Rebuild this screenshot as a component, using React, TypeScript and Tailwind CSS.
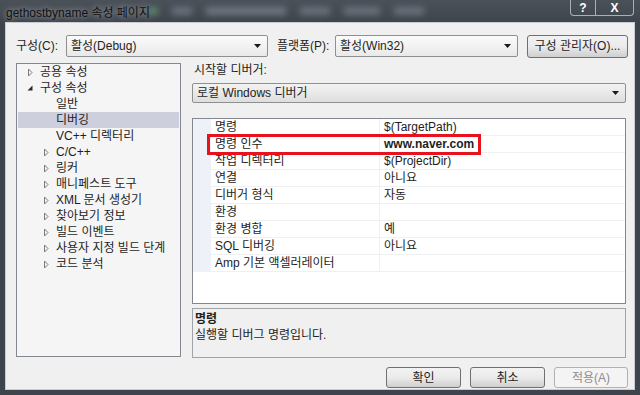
import React from "react";

const treeItems: { label: string; level: number; arrow?: "open" | "closed"; selected?: boolean }[] = [
  { label: "공용 속성", level: 0, arrow: "closed" },
  { label: "구성 속성", level: 0, arrow: "open" },
  { label: "일반", level: 1 },
  { label: "디버깅", level: 1, selected: true },
  { label: "VC++ 디렉터리", level: 1 },
  { label: "C/C++", level: 1, arrow: "closed" },
  { label: "링커", level: 1, arrow: "closed" },
  { label: "매니페스트 도구", level: 1, arrow: "closed" },
  { label: "XML 문서 생성기", level: 1, arrow: "closed" },
  { label: "찾아보기 정보", level: 1, arrow: "closed" },
  { label: "빌드 이벤트", level: 1, arrow: "closed" },
  { label: "사용자 지정 빌드 단계", level: 1, arrow: "closed" },
  { label: "코드 분석", level: 1, arrow: "closed" },
];

const props: [string, string, boolean?][] = [
  ["명령", "$(TargetPath)"],
  ["명령 인수", "www.naver.com", true],
  ["작업 디렉터리", "$(ProjectDir)"],
  ["연결", "아니요"],
  ["디버거 형식", "자동"],
  ["환경", ""],
  ["환경 병합", "예"],
  ["SQL 디버깅", "아니요"],
  ["Amp 기본 액셀러레이터", ""],
];

const DownArrow = () => (
  <svg width="7" height="4" viewBox="0 0 7 4">
    <path d="M0 0 H7 L3.5 4 Z" fill="#1a1a1a" />
  </svg>
);

const Combo = ({ text, w }: { text: string; w: string }) => (
  <div className={`${w} h-[22px] flex items-center justify-between pl-[4px] pr-[6px] rounded-[2px] border border-[#8e8f8f] bg-gradient-to-b from-[#fbfbfb] to-[#e9e9e9]`}>
    <span>{text}</span>
    <DownArrow />
  </div>
);

const Btn = ({ text, w, disabled }: { text: string; w: string; disabled?: boolean }) => (
  <div
    className={`${w} flex items-center justify-center rounded-[3px] border ${
      disabled
        ? "border-[#adb2b5] bg-[#f4f4f4] text-[#8d8d8d]"
        : "border-[#707070] bg-gradient-to-b from-[#f2f2f2] via-[#ebebeb] to-[#cfcfcf]"
    }`}
  >
    {text}
  </div>
);

const Arrow = ({ kind }: { kind: "open" | "closed" }) =>
  kind === "closed" ? (
    <svg width="6" height="9" viewBox="0 0 6 9">
      <path d="M1.5 1 L5 4.5 L1.5 8 Z" fill="none" stroke="#7a7a7a" />
    </svg>
  ) : (
    <svg width="6" height="6" viewBox="0 0 6 6">
      <path d="M5.5 0.5 L5.5 5.5 L0.5 5.5 Z" fill="#2a2a2a" />
    </svg>
  );

export default function App() {
  return (
    <div className="w-[640px] h-[395px] overflow-hidden flex flex-col bg-[#3e444c] font-['Liberation_Sans','Noto_Sans_CJK_KR',sans-serif] text-[12px] text-[#1e1e1e]">
      {/* title bar */}
      <div className="relative h-[22px] flex justify-between bg-gradient-to-b from-[#4b5159] to-[#3f454d]">
        <div className="absolute left-[150px] top-[2px] w-[290px] h-[18px] flex items-center gap-[14px] blur-[3px] opacity-60">
          <span className="w-[8px] h-[8px] rounded-full bg-[#6fc27a]" />
          <span className="w-[20px] h-[8px] bg-[#7f8a96]" />
          <span className="w-[80px] h-[8px] bg-[#8792a0]" />
          <span className="w-[30px] h-[8px] bg-[#7f8a96]" />
          <span className="w-[36px] h-[8px] bg-[#7f8a96]" />
          <span className="w-[30px] h-[8px] bg-[#7f8a96]" />
        </div>
        <div className="relative pl-[6px] pt-[4px] text-[#111] [text-shadow:0_0_6px_rgba(255,255,255,0.7)]">
          gethostbyname 속성 페이지
        </div>
        <div className="relative flex mr-[6px] h-[16px] border border-t-0 border-[#aab0b8] rounded-b-[4px] text-white font-bold text-[12px]">
          <div className="w-[25px] flex items-center justify-center border-r border-[#aab0b8]">?</div>
          <div className="w-[37px] flex items-center justify-center">X</div>
        </div>
      </div>

      {/* client */}
      <div className="flex-1 mx-[5px] mb-[5px] bg-[#f0f0f0] border border-[#c9cdd2] flex flex-col pl-[10px] pr-[6px] pt-[12px]">
        <div className="h-[22px] flex items-center">
          <span className="w-[50px]">구성(C):</span>
          <Combo text="활성(Debug)" w="w-[202px]" />
          <span className="w-[58px] ml-[9px]">플랫폼(P):</span>
          <Combo text="활성(Win32)" w="w-[183px]" />
          <div className="ml-[9px] h-[23px] flex">
            <Btn text="구성 관리자(O)..." w="w-[101px]" />
          </div>
        </div>

        <div className="mt-[6px] flex">
          {/* tree */}
          <div className="w-[165px] h-[294px] border border-[#828790] bg-[#f5f5f5] px-[1px]">
            {treeItems.map((it) => (
              <div
                key={it.label}
                className={`h-[16px] flex items-center ${it.selected ? "bg-[#cdd0dc]" : ""} ${it.level === 0 ? "pl-[9px]" : "pl-[25px]"}`}
              >
                <span className="w-[13px] flex items-center">{it.arrow && <Arrow kind={it.arrow} />}</span>
                <span>{it.label}</span>
              </div>
            ))}
          </div>

          {/* right column */}
          <div className="ml-[11px] w-[434px] flex flex-col">
            <div className="h-[14px] leading-[14px] pl-[2px]">시작할 디버거:</div>
            <div className="mt-[6px] h-[20px] flex items-center justify-between pl-[4px] pr-[6px] rounded-[2px] border border-[#8e8f8f] bg-gradient-to-b from-[#f3f3f3] to-[#dedede]">
              <span>로컬 Windows 디버거</span>
              <DownArrow />
            </div>

            <div className="relative mt-[15px] h-[186px] border border-[#828790] bg-white">
              {props.map(([k, v, bold]) => (
                <div key={k} className="h-[17px] flex">
                  <div className="w-[18px] bg-[#eef1f7]" />
                  <div className="w-[169px] pl-[4px] flex items-center border-b border-r border-[#f0f0f0]">{k}</div>
                  <div className={`flex-1 pl-[4px] flex items-center border-b border-[#f0f0f0] ${bold ? "font-bold" : ""}`}>{v}</div>
                </div>
              ))}
              <div className="absolute left-[14px] top-[15px] w-[274px] h-[21px] border-[3px] border-[#e8121c]" />
            </div>

            <div className="mt-[4px] h-[50px] border border-[#a0a4a8] bg-[#f0f0f0] px-[2px] pt-[2px]">
              <div className="font-bold leading-[16px]">명령</div>
              <div className="leading-[16px]">실행할 디버그 명령입니다.</div>
            </div>
          </div>
        </div>

        <div className="mt-[9px] h-[21px] flex justify-end gap-[9px]">
          <Btn text="확인" w="w-[75px]" />
          <Btn text="취소" w="w-[75px]" />
          <Btn text="적용(A)" w="w-[74px]" disabled />
        </div>
      </div>
    </div>
  );
}
